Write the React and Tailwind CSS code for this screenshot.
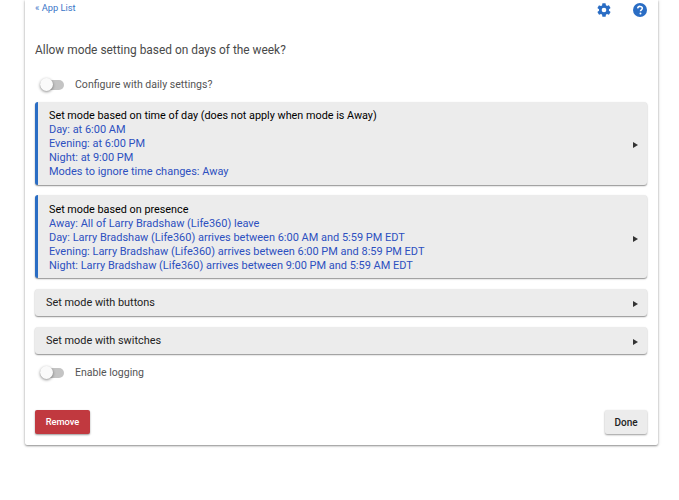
const F = { fontFamily: 'Roboto, "Liberation Sans", sans-serif' };

function Toggle({ label }) {
  return (
    <div className="flex items-center h-[20px] pl-[5px]">
      <div className="relative w-[24px] h-[10px] rounded-full bg-[#c4c4c4]">
        <div className="absolute left-0 top-[-2px] w-[13px] h-[13px] rounded-full bg-[#fafafa] shadow-[0_1px_3px_rgba(0,0,0,0.45)]" />
      </div>
      <span className="ml-[11px] text-[10.55px] text-[#555]">{label}</span>
    </div>
  );
}

function Arrow() {
  return <span className="w-0 h-0 border-y-[3.5px] border-y-transparent border-l-[5px] border-l-[#333] mr-[9px] mt-[2px] shrink-0" />;
}

function Section({ title, lines, pad }) {
  return (
    <div className={`flex items-center justify-between rounded-[3px] border-l-[3px] border-[#2a6dc4] bg-[#ececec] shadow-[0_1px_1.5px_rgba(0,0,0,0.45)] pl-[11px] leading-[14px] ${pad}`}>
      <div>
        <div className="text-black text-[10.82px]">{title}</div>
        {lines.map((l) => <div key={l} className="text-[#2d50c0] text-[10.97px]">{l}</div>)}
      </div>
      <Arrow />
    </div>
  );
}

function Plain({ title }) {
  return (
    <div className="flex items-center justify-between h-[27px] rounded-[3px] bg-[#ececec] shadow-[0_1px_1.5px_rgba(0,0,0,0.45)] pl-[11px] pt-[1px] text-[10.9px] text-[#222]">
      <span>{title}</span>
      <Arrow />
    </div>
  );
}

export default function App() {
  return (
    <div style={F} className="w-[679px] h-[500px] bg-white overflow-hidden">
      <div className="ml-[25px] w-[633px] h-[445px] bg-white rounded-b-[2px] shadow-[0_1px_2px_rgba(0,0,0,0.4),0_0_4px_rgba(0,0,0,0.12)] pl-[10px] pr-[11px] flex flex-col">
        <div className="flex justify-between h-[20px]">
          <a className="text-[9.3px] text-[#3a76c8] mt-[2px] leading-[12px]">« App List</a>
          <div className="flex items-center gap-[21px] h-[20px]">
            <svg width="16" height="16" viewBox="0 0 24 24" fill="#2a6dc4"><path fillRule="evenodd" d="M19.4 13c.04-.33.06-.66.06-1s-.02-.67-.06-1l2.1-1.65a.5.5 0 0 0 .12-.64l-2-3.46a.5.5 0 0 0-.6-.22l-2.49 1a7.3 7.3 0 0 0-1.7-1l-.38-2.65A.5.5 0 0 0 14 2h-4a.5.5 0 0 0-.5.42l-.38 2.65c-.62.25-1.18.6-1.7 1l-2.49-1a.5.5 0 0 0-.6.22l-2 3.46a.5.5 0 0 0 .12.64L4.56 11a8 8 0 0 0 0 2l-2.11 1.65a.5.5 0 0 0-.12.64l2 3.46c.12.22.38.3.6.22l2.49-1c.52.4 1.08.74 1.7 1l.38 2.65c.04.24.25.42.5.42h4c.25 0 .46-.18.5-.42l.38-2.65c.62-.26 1.18-.6 1.7-1l2.49 1c.22.08.48 0 .6-.22l2-3.46a.5.5 0 0 0-.12-.64L19.4 13zM12 15.5a3.5 3.5 0 1 1 0-7 3.5 3.5 0 0 1 0 7z"/></svg>
            <svg width="14" height="14" viewBox="0 0 24 24"><circle cx="12" cy="12" r="12" fill="#2a6dc4"/><path d="M8 9.2a4 4 0 0 1 4-3.4c2.3 0 4 1.4 4 3.4 0 2.6-3.2 2.6-3.2 5" fill="none" stroke="#fff" strokeWidth="2.6"/><circle cx="12.8" cy="18" r="1.7" fill="#fff"/></svg>
          </div>
        </div>
        <div className="mt-[22px] text-[11.9px] leading-[16px] text-[#4a4a4a]">Allow mode setting based on days of the week?</div>
        <div className="mt-[17px]"><Toggle label="Configure with daily settings?" /></div>
        <div className="mt-[7px] flex flex-col">
          <Section pad="pt-[7px] pb-[6px]" title="Set mode based on time of day (does not apply when mode is Away)" lines={["Day: at 6:00 AM", "Evening: at 6:00 PM", "Night: at 9:00 PM", "Modes to ignore time changes: Away"]} />
          <div className="mt-[10px]"><Section pad="pt-[8px] pb-[5px]" title="Set mode based on presence" lines={["Away: All of Larry Bradshaw (Life360) leave", "Day: Larry Bradshaw (Life360) arrives between 6:00 AM and 5:59 PM EDT", "Evening: Larry Bradshaw (Life360) arrives between 6:00 PM and 8:59 PM EDT", "Night: Larry Bradshaw (Life360) arrives between 9:00 PM and 5:59 AM EDT"]} /></div>
          <div className="mt-[11px]"><Plain title="Set mode with buttons" /></div>
          <div className="mt-[11px]"><Plain title="Set mode with switches" /></div>
        </div>
        <div className="mt-[9px]"><Toggle label="Enable logging" /></div>
        <div className="mt-[27px] flex justify-between">
          <button className="w-[55px] h-[24px] rounded-[2px] bg-[#c1393f] text-white text-[9.3px] font-medium shadow-[0_1px_2px_rgba(0,0,0,0.4)]">Remove</button>
          <button className="w-[42px] h-[24px] rounded-[2px] bg-[#ececec] text-[#222] text-[10px] font-medium shadow-[0_1px_2px_rgba(0,0,0,0.4)]">Done</button>
        </div>
      </div>
    </div>
  );
}
